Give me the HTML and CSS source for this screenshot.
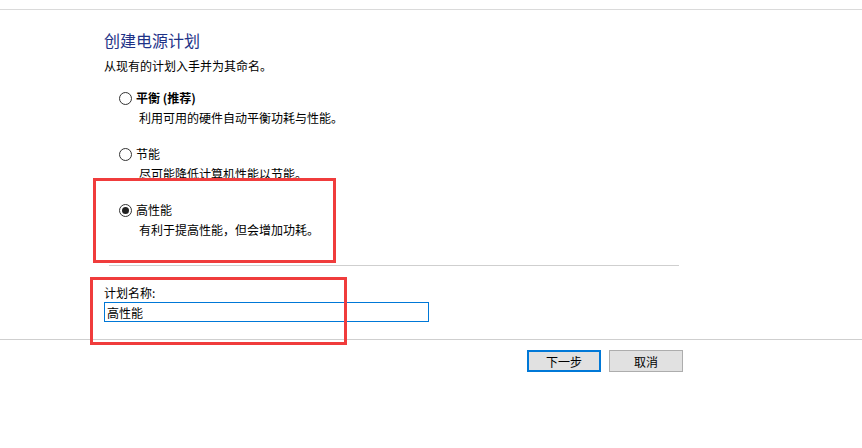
FILE: index.html
```html
<!DOCTYPE html>
<html lang="zh-CN">
<head>
<meta charset="utf-8">
<title>创建电源计划</title>
<link rel="stylesheet" href="styles.css">
</head>
<body>
<div class="topbar"></div>
<main class="content">
  <h1 class="title">创建电源计划</h1>
  <p class="subtitle">从现有的计划入手并为其命名。</p>

  <div class="option">
    <div class="opt-head">
      <svg class="radio" width="13" height="13" viewBox="0 0 13 13"><circle cx="6.5" cy="6.5" r="6" fill="#fff" stroke="#333" stroke-width="1"/></svg>
      <span class="opt-label bold">平衡 (推荐)</span>
    </div>
    <div class="opt-desc">利用可用的硬件自动平衡功耗与性能。</div>
  </div>

  <div class="option">
    <div class="opt-head">
      <svg class="radio" width="13" height="13" viewBox="0 0 13 13"><circle cx="6.5" cy="6.5" r="6" fill="#fff" stroke="#333" stroke-width="1"/></svg>
      <span class="opt-label">节能</span>
    </div>
    <div class="opt-desc">尽可能降低计算机性能以节能。</div>
  </div>

  <div class="option">
    <div class="opt-head">
      <svg class="radio" width="13" height="13" viewBox="0 0 13 13"><circle cx="6.5" cy="6.5" r="6" fill="#fff" stroke="#333" stroke-width="1"/><circle cx="6.5" cy="6.5" r="3.5" fill="#222"/></svg>
      <span class="opt-label">高性能</span>
    </div>
    <div class="opt-desc">有利于提高性能，但会增加功耗。</div>
  </div>

  <div class="separator"></div>

  <label class="name-label" for="plan">计划名称:</label>
  <input id="plan" class="name-input" type="text" value="高性能">
</main>
<footer class="footer">
  <button class="btn btn-primary">下一步</button>
  <button class="btn">取消</button>
</footer>
<div class="mark mark-a"></div>
<div class="mark mark-b"></div>
</body>
</html>
```
FILE: styles.css
```css
html, body {
  margin: 0;
  padding: 0;
  background: #fff;
}
body {
  width: 862px;
  height: 448px;
  overflow: hidden;
  position: relative;
  font-family: "Noto Sans CJK SC", "Noto Sans", sans-serif;
  font-size: 12px;
  color: #000;
}
.topbar {
  height: 9px;
  border-bottom: 1px solid #dadada;
}
.content {
  padding-left: 104px;
  display: flex;
  flex-direction: column;
  align-items: flex-start;
}
.title {
  margin: 20px 0 0;
  font-size: 16px;
  line-height: 20px;
  font-weight: normal;
  color: #1e3287;
}
.subtitle {
  margin: 8px 0 0;
  line-height: 16px;
}
.option {
  margin-top: 16px;
  display: flex;
  flex-direction: column;
}
.option + .option {
  margin-top: 20px;
}
.opt-head {
  display: flex;
  align-items: center;
  height: 16px;
  margin-left: 15px;
  gap: 4px;
}
.radio {
  display: block;
  flex: none;
}
.opt-label {
  line-height: 16px;
}
.bold {
  font-weight: bold;
}
.opt-desc {
  margin-top: 4px;
  margin-left: 35px;
  line-height: 16px;
}
.separator {
  margin-top: 27px;
  margin-left: 5px;
  width: 570px;
  height: 1px;
  background: #cfcfcf;
}
.name-label {
  margin-top: 19px;
  line-height: 16px;
}
.name-input {
  margin: 1px 0 0;
  box-sizing: border-box;
  width: 325px;
  height: 20px;
  border: 1px solid #0078d7;
  padding: 0 2px;
  font-family: inherit;
  font-size: 12px;
  color: #000;
  outline: none;
}
.footer {
  margin-top: 17px;
  border-top: 1px solid #cfcfcf;
  padding: 10px 0 0 527px;
  display: flex;
  gap: 8px;
}
.btn {
  box-sizing: border-box;
  width: 74px;
  height: 22px;
  margin: 0;
  padding: 0;
  background: #e1e1e1;
  border: 1px solid #adadad;
  font-family: inherit;
  font-size: 12px;
  color: #000;
}
.btn-primary {
  border: 2px solid #0078d7;
}
.mark {
  position: absolute;
  box-sizing: border-box;
  border: 3px solid #f03c3c;
}
.mark-a {
  left: 93px;
  top: 178px;
  width: 243px;
  height: 85px;
}
.mark-b {
  left: 90px;
  top: 277px;
  width: 257px;
  height: 68px;
}
```
